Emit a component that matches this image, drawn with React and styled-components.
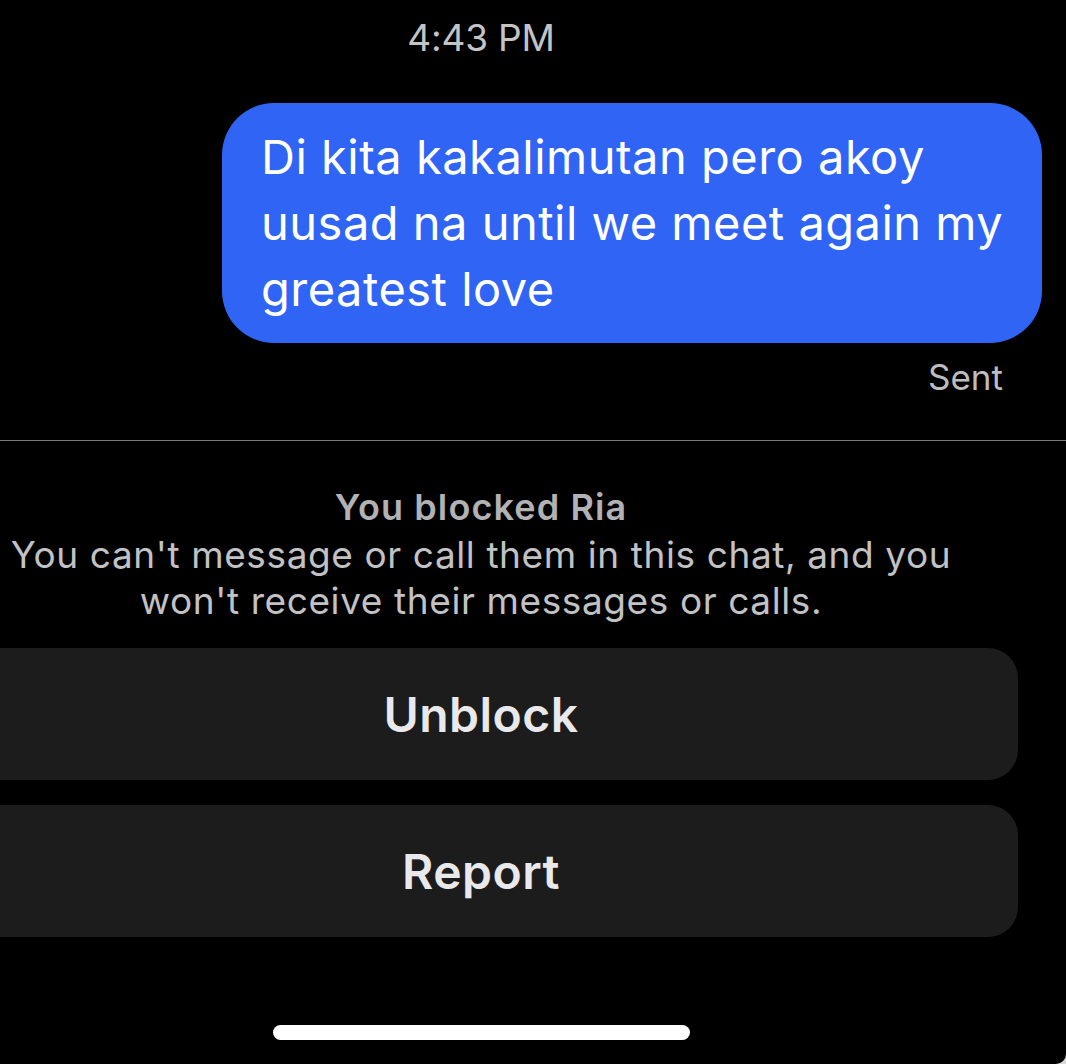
import React from "react";
import styled, { createGlobalStyle } from "styled-components";

const Global = createGlobalStyle`
  html, body {
    margin: 0;
    padding: 0;
    background: #d9d9d9;
    overflow: hidden;
  }
  body {
    font-family: Inter, "Noto Sans", "Liberation Sans", sans-serif;
    -webkit-font-smoothing: antialiased;
  }
`;

const Viewport = styled.div`
  width: 1066px;
  height: 1064px;
  overflow: hidden;
  background: #000;
  border-bottom-right-radius: 10px;
`;

const Screen = styled.div`
  width: 1170px;
  height: 1064px;
  margin-left: -104px;
  background: #000;
  display: flex;
  flex-direction: column;
`;

const Timestamp = styled.div`
  padding-top: 16px;
  text-align: center;
  font-size: 37px;
  line-height: 44px;
  color: #c4c4c6;
  letter-spacing: -0.2px;
`;

const BubbleRow = styled.div`
  display: flex;
  justify-content: flex-end;
  padding: 0 24px;
  margin-top: 43px;
`;

const Bubble = styled.div`
  width: 820px;
  box-sizing: border-box;
  padding: 21px 20px 21px 39px;
  background: #3064f4;
  border-radius: 52px;
  color: #fff;
  font-size: 47px;
  line-height: 66px;
  letter-spacing: 0.5px;
`;

const Status = styled.div`
  margin-top: 14px;
  padding-right: 63px;
  text-align: right;
  font-size: 35px;
  line-height: 40px;
  color: #bdbdbf;
`;

const Divider = styled.div`
  margin-top: 43px;
  height: 1px;
  background: #7a7a7c;
`;

const Notice = styled.div`
  margin-top: 45px;
  text-align: center;
  display: flex;
  flex-direction: column;
  gap: 4px;
`;

const NoticeTitle = styled.div`
  font-size: 36px;
  line-height: 42px;
  font-weight: 600;
  letter-spacing: 1.1px;
  color: #b2b2b4;
`;

const NoticeText = styled.div`
  font-size: 37px;
  line-height: 46px;
  letter-spacing: 0.6px;
  color: #c2c2c4;
  padding: 0 100px;
`;

const Actions = styled.div`
  margin: 24px 48px 0;
  display: flex;
  flex-direction: column;
  gap: 25px;
`;

const ActionButton = styled.button`
  height: 132px;
  border: none;
  border-radius: 30px;
  background: #1c1c1d;
  color: #e9e9eb;
  font-family: inherit;
  font-size: 48px;
  font-weight: 600;
  letter-spacing: 0.5px;
  cursor: pointer;
`;

const HomeBar = styled.div`
  margin: 88px auto 0;
  width: 417px;
  height: 15px;
  border-radius: 8px;
  background: #fff;
`;

export default function App() {
  return (
    <>
      <Global />
      <Viewport>
        <Screen>
          <Timestamp>4:43 PM</Timestamp>
          <BubbleRow>
            <Bubble>
              Di kita kakalimutan pero akoy uusad na until we meet again my greatest love
            </Bubble>
          </BubbleRow>
          <Status>Sent</Status>
          <Divider />
          <Notice>
            <NoticeTitle>You blocked Ria</NoticeTitle>
            <NoticeText>
              You can't message or call them in this chat, and you won't receive
              their messages or calls.
            </NoticeText>
          </Notice>
          <Actions>
            <ActionButton>Unblock</ActionButton>
            <ActionButton>Report</ActionButton>
          </Actions>
          <HomeBar />
        </Screen>
      </Viewport>
    </>
  );
}
